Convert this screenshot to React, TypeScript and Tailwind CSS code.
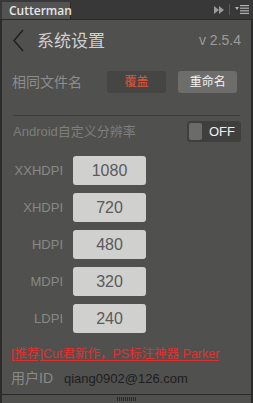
import { useState } from 'react'

const DPIS = [
  { label: 'XXHDPI', value: '1080' },
  { label: 'XHDPI', value: '720' },
  { label: 'HDPI', value: '480' },
  { label: 'MDPI', value: '320' },
  { label: 'LDPI', value: '240' },
]

const FONT = "font-['Liberation_Sans','Noto_Sans_CJK_SC',sans-serif]"

export default function App() {
  const [mode, setMode] = useState<'cover' | 'rename'>('cover')
  const [custom, setCustom] = useState(false)

  return (
    <div className={`w-[253px] h-[403px] flex flex-col bg-[#2c2c2c] ${FONT}`}>
      {/* Tab bar */}
      <div className="h-[20px] flex items-end bg-[#383838] border-b border-[#2a2a2a]">
        <div className="ml-[2px] h-[17px] w-[69px] bg-[#535353] border-r border-[#2a2a2a] flex items-center pl-[7px] text-[12px] font-semibold text-[#e6e6e6] font-['Open_Sans',sans-serif]">
          Cutterman
        </div>
        <div className="flex-1" />
        <div className="flex items-center gap-[5px] pr-[4px] h-full">
          <svg width="10" height="8" viewBox="0 0 10 8">
            <path d="M0 0 L5 4 L0 8 Z M5 0 L10 4 L5 8 Z" fill="#9a9a9a" />
          </svg>
          <div className="w-[1px] h-[11px] bg-[#5a5a5a]" />
          <svg width="14" height="9" viewBox="0 0 14 9">
            <path d="M0 2 L4 2 L2 5 Z" fill="#b0b0b0" />
            <rect x="5" y="0" width="9" height="1.2" fill="#b0b0b0" />
            <rect x="5" y="2.6" width="9" height="1.2" fill="#b0b0b0" />
            <rect x="5" y="5.2" width="9" height="1.2" fill="#b0b0b0" />
            <rect x="5" y="7.8" width="9" height="1.2" fill="#b0b0b0" />
          </svg>
        </div>
      </div>

      {/* Panel */}
      <div className="flex-1 mx-[2px] bg-[#50504e] flex flex-col">
        {/* Header */}
        <div className="h-[40px] flex items-center pl-[10px] pr-[10px]">
          <svg width="13" height="23" viewBox="0 0 13 23">
            <path d="M11 1 L2 11.5 L11 22" fill="none" stroke="#1e1e1e" strokeWidth="1.4" />
          </svg>
          <span className="ml-[12px] text-[17px] text-[#cfcfcf] font-['Noto_Sans_CJK_SC',sans-serif]">系统设置</span>
          <span className="ml-auto text-[14px] text-[#9b9b9b]">v 2.5.4</span>
        </div>

        {/* Same file name */}
        <div className="mt-[11px] h-[22px] flex items-center pl-[10px] pr-[14px]">
          <span className="text-[14px] text-[#8d8d8b] w-[95px]">相同文件名</span>
          <button
            onClick={() => setMode('cover')}
            className={`w-[60px] h-[22px] rounded-[3px] text-[12px] ${mode === 'cover' ? 'bg-[#454543] text-[#e2553a]' : 'bg-[#6d6d6b] text-[#eeeeee]'}`}
          >
            覆盖
          </button>
          <button
            onClick={() => setMode('rename')}
            className={`ml-[12px] w-[59px] h-[22px] rounded-[3px] text-[12px] ${mode === 'rename' ? 'bg-[#454543] text-[#e2553a]' : 'bg-[#6d6d6b] text-[#f2f2f2]'}`}
          >
            重命名
          </button>
        </div>

        <div className="mt-[22px] mx-[11px] h-[1px] bg-[#3e3e3c]" />

        {/* Android custom */}
        <div className="mt-[5px] h-[21px] flex items-center pl-[11px] pr-[10px]">
          <span className="text-[13px] text-[#7e7e7c]">Android自定义分辨率</span>
          <button
            onClick={() => setCustom(!custom)}
            className="ml-auto w-[54px] h-[21px] rounded-[3px] bg-[#3f3f3d] flex items-center pl-[2px] pr-[6px]"
          >
            <span className="w-[13px] h-[17px] rounded-[2px] bg-[#6b6b69]" />
            <span className="ml-auto text-[13px] text-[#f0f0f0]">{custom ? 'ON' : 'OFF'}</span>
          </button>
        </div>

        {/* DPI list */}
        <div className="mt-[14px] flex flex-col gap-[8px]">
          {DPIS.map(d => (
            <div key={d.label} className="flex items-center">
              <span className="w-[61px] text-right text-[13px] text-[#888886]">{d.label}</span>
              <div className="ml-[10px] w-[73px] h-[29px] rounded-[3px] bg-[#d0d0ce] flex items-center justify-center text-[16px] text-[#5a5a58]">
                {d.value}
              </div>
            </div>
          ))}
        </div>

        <a className="mt-[12px] ml-[9px] text-[12.5px] text-[#e0312e] underline underline-offset-[2px]">
          [推荐]Cut君新作，PS标注神器 Parker
        </a>

        <div className="mt-[4px] flex items-center pl-[9px]">
          <span className="text-[14px] text-[#8a8a88]">用户ID</span>
          <span className="ml-[11px] text-[13px] text-[#1e1e1e]">qiang0902@126.com</span>
        </div>
      </div>

      {/* Bottom bar */}
      <div className="h-[9px] mx-[2px] border-t border-[#2a2a2a] bg-[#50504e] flex justify-center items-center">
        <div className="w-[20px] h-[4px] bg-[repeating-linear-gradient(90deg,#2a2a2a_0_1px,transparent_1px_2px)]" />
      </div>
    </div>
  )
}
